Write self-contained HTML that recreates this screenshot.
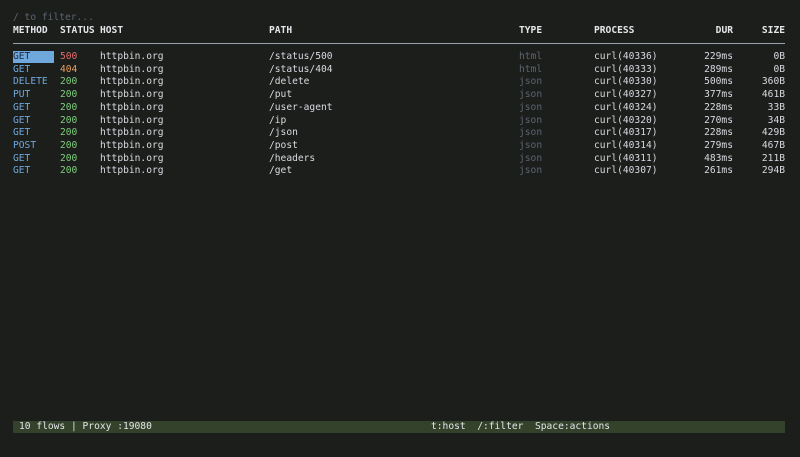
<!DOCTYPE html>
<html><head><meta charset="utf-8"><style>
body{margin:0;width:800px;height:457px;background:#1c1e1c;overflow:hidden;font-family:"DejaVu Sans Mono","Liberation Mono",monospace;font-size:9.6px;color:#d8dae0;position:relative}
.t{position:absolute;white-space:pre;line-height:12px}
.r{text-align:right}
.m{color:#6fa8dc}.g{color:#7ed07e}.e{color:#e06c6c}.o{color:#e8a060}.d{color:#5c6470}
.h{font-weight:bold;color:#e4e6ea}
.row{position:absolute;left:0;width:800px;height:12px}
.row span{position:absolute;white-space:pre;line-height:12px;top:0}
.c1{left:13px}.c2{left:60px}.c3{left:100px}.c4{left:269px}.c5{left:519px;color:#5c6470}.c6{left:594px}
.c7{left:680px;width:53px;text-align:right}.c8{left:740px;width:45px;text-align:right}
</style></head><body>
<div class="t d" style="left:13px;top:12px">/ to filter...</div>
<div class="t h" style="left:13px;top:25px">METHOD</div>
<div class="t h" style="left:60px;top:25px">STATUS</div>
<div class="t h" style="left:100px;top:25px">HOST</div>
<div class="t h" style="left:269px;top:25px">PATH</div>
<div class="t h" style="left:519px;top:25px">TYPE</div>
<div class="t h" style="left:594px;top:25px">PROCESS</div>
<div class="t h r" style="left:680px;width:53px;top:25px">DUR</div>
<div class="t h r" style="left:740px;width:45px;top:25px">SIZE</div>
<div style="position:absolute;left:13px;top:43px;width:772px;height:1px;background:#9aa0b0"></div>
<div style="position:absolute;left:13px;top:51px;width:41px;height:12px;background:#6fa8dc"></div>

<div class="row" style="top:51px"><span class="c1" style="color:#1c2a44">GET</span><span class="c2 e">500</span><span class="c3">httpbin.org</span><span class="c4">/status/500</span><span class="c5">html</span><span class="c6">curl(40336)</span><span class="c7">229ms</span><span class="c8">0B</span></div>
<div class="row" style="top:63.7px"><span class="c1 m">GET</span><span class="c2 o">404</span><span class="c3">httpbin.org</span><span class="c4">/status/404</span><span class="c5">html</span><span class="c6">curl(40333)</span><span class="c7">289ms</span><span class="c8">0B</span></div>
<div class="row" style="top:76.4px"><span class="c1 m">DELETE</span><span class="c2 g">200</span><span class="c3">httpbin.org</span><span class="c4">/delete</span><span class="c5">json</span><span class="c6">curl(40330)</span><span class="c7">500ms</span><span class="c8">360B</span></div>
<div class="row" style="top:89.1px"><span class="c1 m">PUT</span><span class="c2 g">200</span><span class="c3">httpbin.org</span><span class="c4">/put</span><span class="c5">json</span><span class="c6">curl(40327)</span><span class="c7">377ms</span><span class="c8">461B</span></div>
<div class="row" style="top:101.8px"><span class="c1 m">GET</span><span class="c2 g">200</span><span class="c3">httpbin.org</span><span class="c4">/user-agent</span><span class="c5">json</span><span class="c6">curl(40324)</span><span class="c7">228ms</span><span class="c8">33B</span></div>
<div class="row" style="top:114.5px"><span class="c1 m">GET</span><span class="c2 g">200</span><span class="c3">httpbin.org</span><span class="c4">/ip</span><span class="c5">json</span><span class="c6">curl(40320)</span><span class="c7">270ms</span><span class="c8">34B</span></div>
<div class="row" style="top:127.2px"><span class="c1 m">GET</span><span class="c2 g">200</span><span class="c3">httpbin.org</span><span class="c4">/json</span><span class="c5">json</span><span class="c6">curl(40317)</span><span class="c7">228ms</span><span class="c8">429B</span></div>
<div class="row" style="top:139.9px"><span class="c1 m">POST</span><span class="c2 g">200</span><span class="c3">httpbin.org</span><span class="c4">/post</span><span class="c5">json</span><span class="c6">curl(40314)</span><span class="c7">279ms</span><span class="c8">467B</span></div>
<div class="row" style="top:152.6px"><span class="c1 m">GET</span><span class="c2 g">200</span><span class="c3">httpbin.org</span><span class="c4">/headers</span><span class="c5">json</span><span class="c6">curl(40311)</span><span class="c7">483ms</span><span class="c8">211B</span></div>
<div class="row" style="top:165.3px"><span class="c1 m">GET</span><span class="c2 g">200</span><span class="c3">httpbin.org</span><span class="c4">/get</span><span class="c5">json</span><span class="c6">curl(40307)</span><span class="c7">261ms</span><span class="c8">294B</span></div>

<div style="position:absolute;left:13px;top:421px;width:772px;height:12px;background:#34422c"></div>
<div class="t" style="left:19px;top:421px;color:#e4e6ea">10 flows | Proxy :19080</div>
<div class="t" style="left:431px;top:421px;color:#e4e6ea">t:host  /:filter  Space:actions</div>
</body></html>
